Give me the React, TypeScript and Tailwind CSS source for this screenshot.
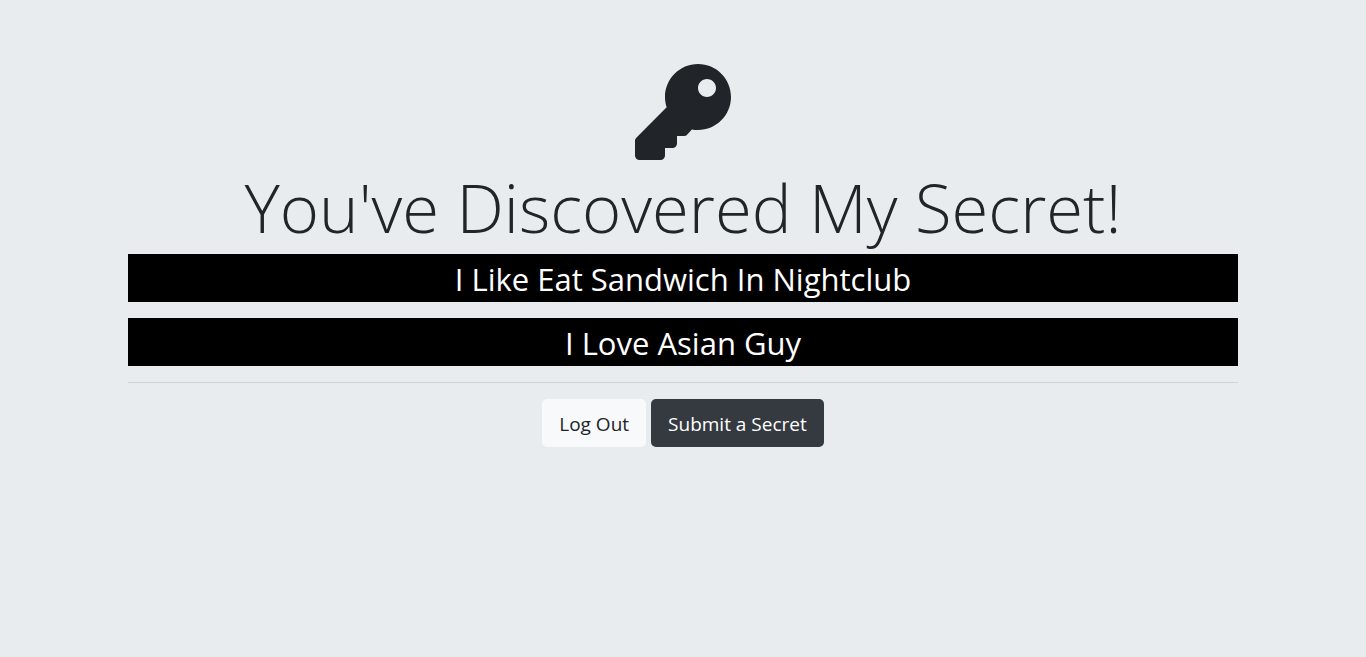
import { FaKey } from "react-icons/fa";

const secrets = ["I Like Eat Sandwich In Nightclub", "I Love Asian Guy"];

export default function App() {
  return (
    <main className="min-h-screen bg-[#e8ecef] px-4 py-16 font-['Open_Sans',sans-serif] text-[#212529]">
      <div className="mx-auto max-w-[1110px] text-center">
        <FaKey className="mx-auto size-24" aria-hidden="true" />
        <h1 className="mt-2 mb-2 text-[67px] leading-[78px] font-light">
          You've Discovered My Secret!
        </h1>
        {secrets.map((secret) => (
          <p key={secret} className="mb-4 bg-black pt-0.5 text-[31px] leading-[46px] text-white">
            {secret}
          </p>
        ))}
        <hr className="mb-4 border-t border-black/10" />
        <div className="flex justify-center gap-[5px]">
          <a href="/logout" className="rounded-[5px] bg-[#f8f9fa] px-[17px] pt-[10px] pb-2 text-[19px] leading-[30px]">
            Log Out
          </a>
          <a href="/submit" className="rounded-[5px] bg-[#343a40] px-[17px] pt-[10px] pb-2 text-[19px] leading-[30px] text-white">
            Submit a Secret
          </a>
        </div>
      </div>
    </main>
  );
}
